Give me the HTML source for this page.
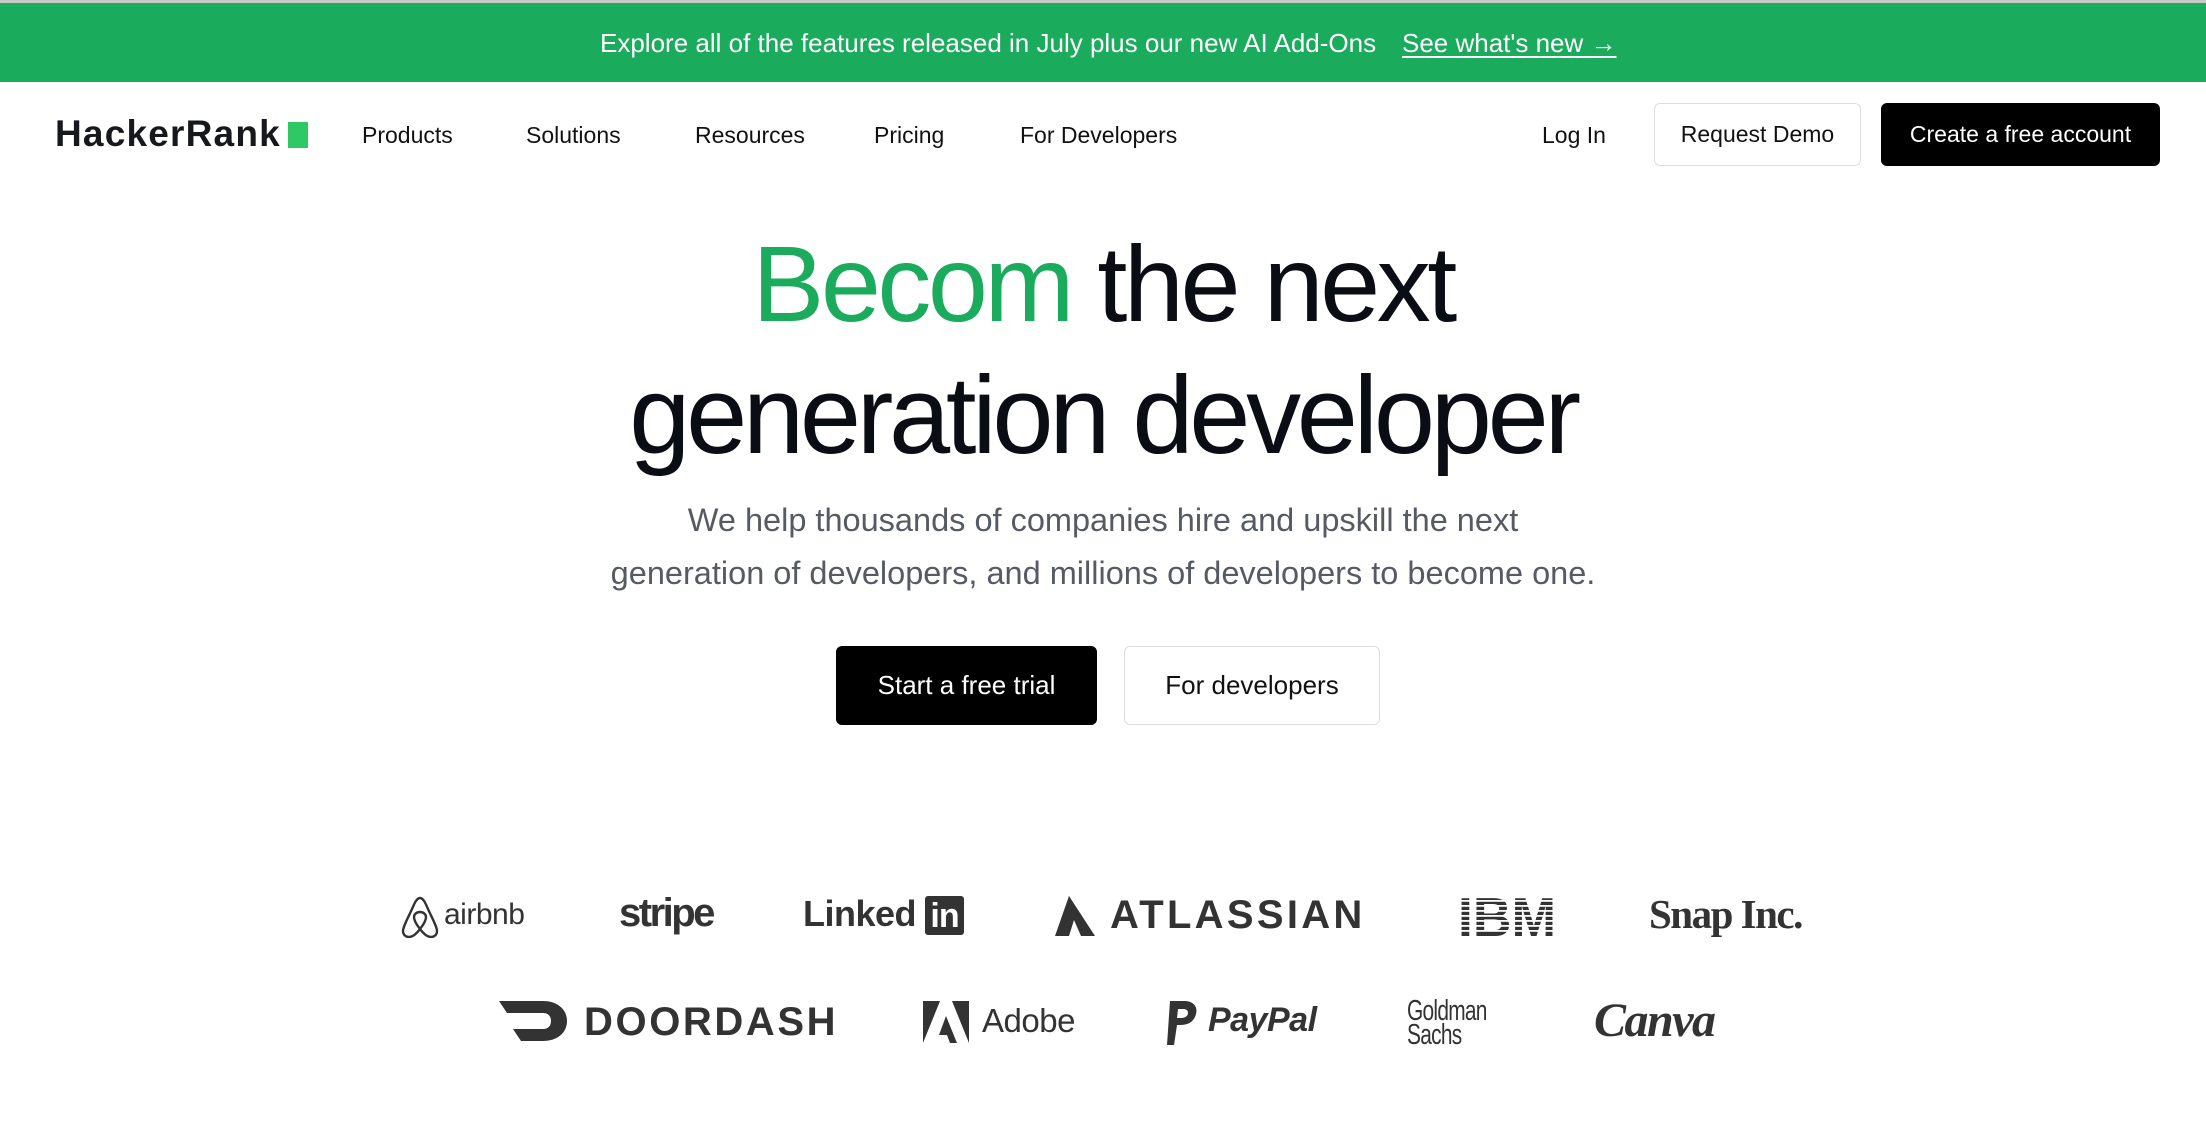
<!DOCTYPE html>
<html><head><meta charset="utf-8"><style>
*{margin:0;padding:0;box-sizing:border-box}
body{width:2206px;height:1128px;background:#fff;font-family:"Liberation Sans",sans-serif;position:relative;overflow:hidden;color:#0a0d14}
.a{position:absolute;white-space:nowrap}
.banner{position:absolute;left:0;top:3px;width:2206px;height:79px;background:#1aab5c;border-top:0}
.top{position:absolute;left:0;top:0;width:2206px;height:3px;background:#c8c8c8}
.nav{font-size:23px;top:122px;color:#111}
.btn{position:absolute;display:flex;align-items:center;justify-content:center;border-radius:6px;font-size:23px}
.logo{color:#333;fill:#333}
</style></head><body>
<div class="top"></div>
<div class="banner"></div>
<div class="a" style="left:600px;top:28px;font-size:26px;color:#fff">Explore all of the features released in July plus our new AI Add-Ons</div>
<div class="a" style="left:1402px;top:28px;font-size:26px;color:#fff;text-decoration:underline;text-underline-offset:4px">See what's new →</div>

<div class="a" style="left:55px;top:113px;font-size:37px;font-weight:bold;letter-spacing:1.2px;color:#16181d">HackerRank</div>
<div class="a" style="left:288px;top:122px;width:20px;height:26px;background:#2ec866"></div>
<div class="a nav" style="left:362px">Products</div>
<div class="a nav" style="left:526px">Solutions</div>
<div class="a nav" style="left:695px">Resources</div>
<div class="a nav" style="left:874px">Pricing</div>
<div class="a nav" style="left:1020px">For Developers</div>
<div class="a nav" style="left:1542px">Log In</div>
<div class="btn" style="left:1654px;top:103px;width:207px;height:63px;border:1px solid #ddd;color:#111">Request Demo</div>
<div class="btn" style="left:1881px;top:103px;width:279px;height:63px;background:#000;color:#fff">Create a free account</div>

<div class="a" style="left:0;width:2206px;text-align:center;top:219px;font-size:108px;letter-spacing:-3.5px;line-height:130px"><span style="color:#1aab5c">Becom</span> the next</div>
<div class="a" style="left:0;width:2206px;text-align:center;top:351px;font-size:110px;letter-spacing:-4.3px;line-height:130px">generation developer</div>
<div class="a" style="left:0;width:2206px;text-align:center;top:494px;font-size:32.5px;line-height:53px;color:#555a64">We help thousands of companies hire and upskill the next<br>generation of developers, and millions of developers to become one.</div>

<div class="btn" style="left:836px;top:646px;width:261px;height:79px;background:#000;color:#fff;font-size:26px">Start a free trial</div>
<div class="btn" style="left:1124px;top:646px;width:256px;height:79px;border:1px solid #ddd;color:#111;font-size:26px">For developers</div>

<svg class="a" style="left:401px;top:896px" width="38" height="42" viewBox="0 0 38 42"><path d="M19 2C16 2 14 6 11 13C6 24 2 31 2 35C2 39 5 41 8 41C12 41 16 37 19 33C22 37 26 41 30 41C33 41 36 39 36 35C36 31 32 24 27 13C24 6 22 2 19 2ZM19 33C15 28 13 24 13 21C13 18 16 16 19 16C22 16 25 18 25 21C25 24 23 28 19 33Z" fill="none" stroke="#333" stroke-width="2.4"/></svg>
<div class="a logo" style="left:444px;top:898px;font-size:30px;letter-spacing:-0.5px">airbnb</div>
<div class="a logo" style="left:619px;top:891px;font-size:40px;font-weight:bold;letter-spacing:-2.5px">stripe</div>
<div class="a logo" style="left:803px;top:893px;font-size:36px;font-weight:bold;letter-spacing:-0.5px">Linked</div>
<div class="a" style="left:925px;top:896px;width:39px;height:39px;background:#333;border-radius:3px;color:#fff;font-weight:bold;font-size:34px;line-height:40px;text-align:center;letter-spacing:-1px">in</div>
<svg class="a" style="left:1055px;top:896px" width="40" height="40" viewBox="0 0 40 40"><path d="M14 0L0 40H14L19 24L26 40H40Z" fill="#333"/></svg>
<div class="a logo" style="left:1110px;top:893px;font-size:40px;font-weight:bold;letter-spacing:3.3px">ATLASSIAN</div>
<svg class="a" style="left:1458px;top:896px" width="98" height="40" viewBox="0 0 98 40"><text x="49" y="40" text-anchor="middle" font-family="Liberation Sans" font-weight="bold" font-size="55" fill="#333" textLength="98" lengthAdjust="spacingAndGlyphs">IBM</text><g fill="#fff"><rect y="4" width="98" height="1.8"/><rect y="9" width="98" height="1.8"/><rect y="14" width="98" height="1.8"/><rect y="19" width="98" height="1.8"/><rect y="24" width="98" height="1.8"/><rect y="29" width="98" height="1.8"/><rect y="34" width="98" height="1.8"/></g></svg>
<div class="a logo" style="left:1649px;top:890px;font-size:41px;font-family:'Liberation Serif',serif;font-weight:bold;letter-spacing:-1.5px">Snap Inc.</div>

<svg class="a" style="left:499px;top:1001px" width="68" height="40" viewBox="0 0 68 40"><path d="M0 0H44C58 0 68 8 68 20C68 32 58 40 44 40H22L14 28H44C49 28 52 25 52 20C52 15 49 12 44 12H8Z" fill="#333"/></svg>
<div class="a logo" style="left:584px;top:1000px;font-size:40px;font-weight:bold;letter-spacing:2.6px">DOORDASH</div>
<svg class="a" style="left:923px;top:1001px" width="46" height="42" viewBox="0 0 46 42"><path d="M0 0H17L0 42ZM29 0H46V42ZM23 15L34 42H27L24 34H16Z" fill="#333"/></svg>
<div class="a logo" style="left:982px;top:1002px;font-size:33px;letter-spacing:-0.5px">Adobe</div>
<svg class="a" style="left:1166px;top:1001px" width="32" height="44" viewBox="0 0 32 44"><path d="M4 0H18C27 0 32 5 30 13C28 21 22 24 14 24H11L8 44H1ZM12 8L11 17H15C19 17 22 15 22 12C22 9 20 8 17 8Z" fill="#333"/></svg>
<div class="a logo" style="left:1208px;top:1001px;font-size:34px;font-weight:bold;font-style:italic;letter-spacing:-0.5px">PayPal</div>
<div class="a logo" style="left:1407px;top:999px;font-size:29px;line-height:24px;font-family:'Liberation Sans',sans-serif;letter-spacing:-1px;transform:scaleX(0.72);transform-origin:left">Goldman<br>Sachs</div>
<div class="a logo" style="left:1594px;top:993px;font-size:48px;font-family:'Liberation Serif',serif;font-style:italic;font-weight:bold;letter-spacing:-1.5px">Canva</div>
</body></html>
